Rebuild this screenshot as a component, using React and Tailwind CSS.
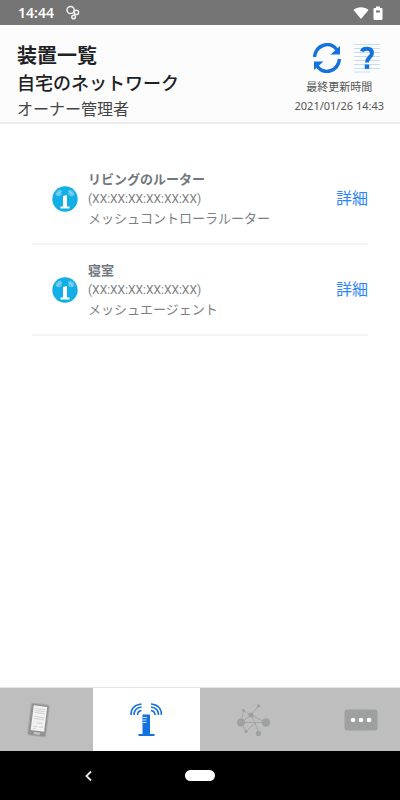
import React from "react";

const devices = [
  { name: "リビングのルーター", mac: "(XX:XX:XX:XX:XX:XX)", role: "メッシュコントローラルーター" },
  { name: "寝室", mac: "(XX:XX:XX:XX:XX:XX)", role: "メッシュエージェント" },
];

function StatusBar() {
  return (
    <div className="flex h-[25px] items-center bg-[#757575] pt-px pl-[18px] pr-[17px] text-white">
      <span className="font-['Noto_Sans',sans-serif] text-sm leading-5 font-semibold">14:44</span>
      <svg className="ml-3 h-4 w-4" viewBox="0 0 16 16" fill="none" stroke="#f2f2f2" strokeWidth="1.5" aria-hidden="true">
        <circle cx="4.6" cy="5" r="3.6" />
        <circle cx="10.4" cy="7.400" r="2.2" />
        <circle cx="7.600" cy="12" r="1.8" />
      </svg>
      <svg className="ml-auto h-3 w-4" viewBox="0 0 16 12" fill="#fff" aria-hidden="true">
        <path d="M8 12 0.5 3C4.500-.6 11.500-.6 15.500 3Z" />
      </svg>
      <svg className="ml-1 h-[14px] w-[10px]" viewBox="0 0 10 14" aria-hidden="true">
        <path d="M3 0.500h4V2h1.500q1 0 1 1v10q0 1-1 1h-7q-1 0-1-1V3q0-1 1-1H3Z" fill="#fff" />
        <path d="M3 4.500h4v2H3Z" fill="#757575" />
      </svg>
    </div>
  );
}

function RefreshIcon() {
  return (
    <svg className="h-[30px] w-[30px]" viewBox="0 0 30 30" fill="none" aria-hidden="true">
      <path d="M2.500 14C4 1.500 18-2.500 25 7" stroke="#1372dc" strokeWidth="3.400" />
      <path d="M28 3v8.500h-9.500Z" fill="#1372dc" />
      <path d="M27.500 16C26 28.500 12 32.500 5 23" stroke="#1372dc" strokeWidth="3.400" />
      <path d="M2 27V18.500H11.500Z" fill="#1372dc" />
    </svg>
  );
}

function HelpIcon() {
  return (
    <svg className="h-[30px] w-[26px]" viewBox="0 0 26 30" fill="none" aria-hidden="true">
      <path d="M0 1.500h26M0 5.500h26M0 9.500h26M0 13.500h26M0 17.500h26M0 21.500h26M0 25.500h26M0 29h16" stroke="#c3def8" />
      <path d="M8 8.500C9 4.500 18 4.500 18 10C18 14 13 14.500 13 19.500" stroke="#1372dc" strokeWidth="4" />
      <path d="M10.800 21.500h4.400v4.400h-4.400Z" fill="#1372dc" />
    </svg>
  );
}

function DeviceIcon() {
  return (
    <svg className="h-[26px] w-[26px] shrink-0" viewBox="0 0 26 26" fill="none" aria-hidden="true">
      <circle cx="13" cy="13" r="12.700" fill="#12aee6" />
      <path d="M3.500 9Q3.500 4 9 3.500L10 8.500 7.500 10.500ZM22.500 9Q22.500 4 17 3.500L16 8.500 18.500 10.500Z" fill="#5cc6ee" />
      <path d="M5.500 9.500Q5.500 6 9.500 5.500M20.500 9.500Q20.500 6 16.500 5.500" stroke="#9adcf5" />
      <path d="M11 10 15 9V20.500h2.500v2h-9v-2H11Z" fill="#fff" />
    </svg>
  );
}

function PhoneIcon() {
  return (
    <svg className="h-9 w-7" viewBox="0 0 28 36" fill="none" aria-hidden="true">
      <g transform="rotate(7 14 18)">
        <rect x="4.500" y="2" width="18" height="32" rx="2" fill="#929292" stroke="#a6a6a6" />
        <rect x="7" y="4" width="13.500" height="25" fill="#f1f1f1" />
        <path d="M9 7h10M9 9h10M9 11h10M9 15h10M9 17h10M12 21h6M9 25h4M15 25h4M9 27h3" stroke="#d2d2d2" />
        <rect x="10.500" y="30.500" width="6" height="2" fill="#c8c8c8" />
      </g>
    </svg>
  );
}

function TowerIcon() {
  return (
    <svg className="h-9 w-8" viewBox="0 0 32 36" fill="none" aria-hidden="true">
      <path d="M12.500 12.500h7.500V32h4.500v2h-16v-2h4Z" fill="#1372dc" />
      <path d="M13 15.500h4M13 18h3.500M13 20.500h3.500" stroke="#c8e0fa" />
      <path d="M1 13Q1 3 11.500 2M4 13Q4 6 11.500 5M7.500 13Q7.500 9 11.500 8.500M31.500 13Q31.500 3 21 2M28.500 13Q28.500 6 21 5M25 13Q25 9 21 8.500" stroke="#1372dc" strokeWidth="1.600" />
    </svg>
  );
}

function NetworkIcon() {
  return (
    <svg className="h-9 w-9" viewBox="0 0 36 36" fill="#9fa1a1" aria-hidden="true">
      <path d="M5 20.500 15 13 22.500 4M7.500 8.500 15 13 30 20.500H5L7.500 8.500M23 31.500 19 21 15 13M10 29.500 19 21M10 29.500 5 20.500" fill="none" stroke="#a5a6a6" />
      <circle cx="5" cy="20.500" r="4" />
      <circle cx="30" cy="20.500" r="4.200" />
      <circle cx="15" cy="13" r="2.600" />
      <circle cx="22.500" cy="4" r="1.700" />
      <circle cx="7.500" cy="8.500" r="1.500" />
      <circle cx="10" cy="29.500" r="1.700" />
      <circle cx="22.500" cy="31.500" r="2.700" />
    </svg>
  );
}

function MoreIcon() {
  return (
    <svg className="h-[22px] w-[34px]" viewBox="0 0 34 22" fill="#fff" aria-hidden="true">
      <rect x="0.500" y="0.500" width="33" height="21" rx="2.500" fill="#9ea0a0" />
      <circle cx="9" cy="11" r="2.300" />
      <circle cx="17" cy="11" r="2.300" />
      <circle cx="25" cy="11" r="2.300" />
    </svg>
  );
}

const tabs = [
  { label: "スマートフォン", Icon: PhoneIcon },
  { label: "装置", Icon: TowerIcon, active: true },
  { label: "ネットワーク", Icon: NetworkIcon },
  { label: "その他", Icon: MoreIcon },
];

export default function App() {
  return (
    <div className="flex min-h-screen flex-col overflow-hidden bg-white font-[Roboto,'Noto_Sans_CJK_JP',sans-serif]">
      <StatusBar />
      <header className="flex items-start justify-between border-b-2 border-[#ececec] bg-[#fcfcfc] pr-4 pl-[17px]">
        <div className="pt-[17px] text-[#202124]">
          <h1 className="text-xl leading-7 font-bold">装置一覧</h1>
          <h2 className="text-lg leading-7 font-medium">自宅のネットワーク</h2>
          <p className="text-base leading-6 text-[#444]">オーナー管理者</p>
        </div>
        <div className="flex flex-col items-center pt-[18px] text-[11px] leading-[18px] text-[#555]">
          <div className="mb-[6px] flex gap-3 self-end pr-1">
            <button type="button" aria-label="更新"><RefreshIcon /></button>
            <button type="button" aria-label="ヘルプ"><HelpIcon /></button>
          </div>
          <p>最終更新時間</p>
          <p className="font-['Noto_Sans',sans-serif]">2021/01/26 14:43</p>
        </div>
      </header>
      <main className="flex-1 px-8 pt-[30px]">
        <ul>
          {devices.map((d) => (
            <li key={d.name} className="flex items-center border-b-2 border-[#f3f3f3] pt-4 pb-[15px] pl-5">
              <DeviceIcon />
              <div className="ml-[10px] flex-1 text-[13px] leading-[19px] text-[#7c7f83]">
                <p className="font-bold text-[#707780]">{d.name}</p>
                <p className="text-xs leading-5">{d.mac}</p>
                <p>{d.role}</p>
              </div>
              <button type="button" className="text-base text-[#2f86f5]">詳細</button>
            </li>
          ))}
        </ul>
      </main>
      <nav className="-mx-[15px] grid h-16 grid-cols-4 border-t border-[#e4e4e4]">
        {tabs.map(({ label, Icon, active }) => (
          <button
            key={label}
            type="button"
            aria-label={label}
            className={active ? "flex items-center justify-center bg-white" : "flex items-center justify-center bg-[#bebebe]"}
          >
            <Icon />
          </button>
        ))}
      </nav>
      <div className="grid h-[49px] grid-cols-9 items-center bg-black">
        <button type="button" aria-label="戻る" className="col-start-2 col-end-4 flex justify-center">
          <svg className="h-3 w-3" viewBox="0 0 12 12" fill="none" stroke="#e6e6e6" strokeWidth="1.800" aria-hidden="true">
            <path d="M8 1.500 3.500 6 8 10.500" />
          </svg>
        </button>
        <button type="button" aria-label="ホーム" className="col-start-4 col-end-7 flex justify-center">
          <span className="block h-[11px] w-[30px] rounded-full bg-white" />
        </button>
      </div>
    </div>
  );
}
